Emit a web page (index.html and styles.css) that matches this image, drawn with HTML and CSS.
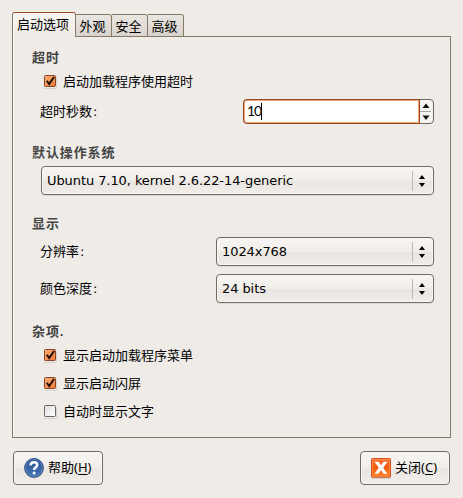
FILE: index.html
```html
<!DOCTYPE html>
<html lang="zh-CN">
<head>
<meta charset="utf-8">
<title>启动管理器</title>
<link rel="stylesheet" href="styles.css">
</head>
<body>
<svg class="defs" width="0" height="0">
  <defs>
    <linearGradient id="orange" x1="0" y1="0" x2="1" y2="1"><stop offset="0" stop-color="#fbb078"/><stop offset="1" stop-color="#f17a30"/></linearGradient>
    <linearGradient id="grey" x1="0" y1="0" x2="1" y2="1"><stop offset="0" stop-color="#dedede"/><stop offset="1" stop-color="#fff"/></linearGradient>
    <linearGradient id="blue" x1="0" y1="0" x2="0" y2="1"><stop offset="0" stop-color="#2d5491"/><stop offset="1" stop-color="#4475bb"/></linearGradient>
    <linearGradient id="red" x1="0" y1="0" x2="0" y2="1"><stop offset="0" stop-color="#f5743c"/><stop offset=".5" stop-color="#f55a10"/><stop offset="1" stop-color="#ff8420"/></linearGradient>
    <symbol id="checked" viewBox="0 0 15 15">
      <rect x="1.5" y="2.5" width="12" height="12" rx="1" fill="none" stroke="#d6d1ca"/>
      <rect x="1.5" y="1.5" width="11" height="11" rx="1" fill="url(#orange)" stroke="#85452a"/>
      <path d="M3.8 6.8L6.2 10L11 3" fill="none" stroke="#170d08" stroke-width="1.9"/>
    </symbol>
    <symbol id="unchecked" viewBox="0 0 15 15">
      <rect x="1.5" y="2.5" width="12" height="12" rx="1" fill="none" stroke="#d6d1ca"/>
      <rect x="1.5" y="1.5" width="11" height="11" rx="1" fill="url(#grey)" stroke="#6e675f"/>
    </symbol>
    <symbol id="updown" viewBox="0 0 6 12">
      <path d="M3 0L6 4H0zM3 12L6 8H0z" fill="#000"/>
    </symbol>
  </defs>
</svg>
<nav class="tabs">
  <div class="tab active">启动选项</div>
  <div class="tab">外观</div>
  <div class="tab">安全</div>
  <div class="tab">高级</div>
</nav>
<main class="panel">
  <h2 class="title">超时</h2>
  <label class="check"><svg class="box"><use href="#checked"/></svg><span>启动加载程序使用超时</span></label>
  <div class="row timeout">
    <span>超时秒数<span class="colon">:</span></span>
    <div class="spin">
      <div class="entry"><span class="value">10</span><i class="caret"></i></div>
      <svg class="steps" width="14" height="23" viewBox="0 0 14 23">
        <path d="M7 3.5L10.5 8H3.5zM7 20L10.5 15.5H3.5z" fill="#111"/>
        <path d="M1 11.5H12" stroke="#aaa59d"/>
      </svg>
    </div>
  </div>
  <h2 class="title system">默认操作系统</h2>
  <div class="select wide"><span>Ubuntu 7.10, kernel 2.6.22-14-generic</span><svg class="arrows"><use href="#updown"/></svg></div>
  <h2 class="title display">显示</h2>
  <div class="row"><span>分辨率<span class="colon">:</span></span><div class="select"><span>1024x768</span><svg class="arrows"><use href="#updown"/></svg></div></div>
  <div class="row depth"><span>颜色深度<span class="colon">:</span></span><div class="select"><span>24 bits</span><svg class="arrows"><use href="#updown"/></svg></div></div>
  <h2 class="title misc">杂项.</h2>
  <label class="check"><svg class="box"><use href="#checked"/></svg><span>显示启动加载程序菜单</span></label>
  <label class="check"><svg class="box"><use href="#checked"/></svg><span>显示启动闪屏</span></label>
  <label class="check"><svg class="box"><use href="#unchecked"/></svg><span>自动时显示文字</span></label>
</main>
<footer class="actions">
  <button class="button">
    <svg width="22" height="22" viewBox="0 0 22 22">
      <circle cx="11" cy="11.5" r="10" fill="#b9b7b3"/>
      <circle cx="11" cy="10.8" r="9.3" fill="url(#blue)" stroke="#254a82"/>
      <circle cx="11" cy="10.8" r="8.4" fill="none" stroke="#7396c8" stroke-width=".7"/>
      <path d="M7.6 8.3Q7.8 5.3 11 5.3Q14.2 5.3 14.2 8Q14.2 9.5 12.4 10.6Q11.1 11.4 11.1 13" fill="none" stroke="#fff" stroke-width="2.5"/>
      <circle cx="11.1" cy="15.9" r="1.5" fill="#fff"/>
    </svg>
    <span>帮助(<u>H</u>)</span>
  </button>
  <button class="button">
    <svg width="22" height="22" viewBox="0 0 22 22">
      <rect x="1" y="1.5" width="20" height="20" rx="1.5" fill="#bbb2aa"/>
      <rect x="1.5" y="1.5" width="19" height="18.5" rx="1" fill="url(#red)" stroke="#d84b12"/>
      <rect x="2.5" y="2.5" width="17" height="16.5" fill="none" stroke="#ff9860" stroke-width=".7"/>
      <path d="M4.5 4.8H8.5L11 8.3L13.5 4.8H17.5L13.2 10.7L17.5 16.7H13.5L11 13.2L8.5 16.7H4.5L8.8 10.7z" fill="#fff"/>
    </svg>
    <span>关闭(<u>C</u>)</span>
  </button>
</footer>
</body>
</html>
```
FILE: styles.css
```css
* { box-sizing: border-box; }
body {
  margin: 0;
  padding: 12px 12px 0;
  width: 463px;
  height: 498px;
  overflow: hidden;
  background: #efebe7;
  color: #000;
  font: 13px/18px "DejaVu Sans", "Noto Sans CJK SC", sans-serif;
}
svg { flex: none; display: block; }
.defs { position: absolute; }
.tabs { display: flex; align-items: flex-end; height: 25px; }
.tab {
  width: 36px;
  height: 23px;
  padding: 3px 2px 0 0;
  border: 1px solid #857867;
  border-left: 0;
  border-radius: 0 3px 0 0;
  background: linear-gradient(#e9e5e1, #d9d3cd);
  text-align: center;
  white-space: nowrap;
}
.tab.active {
  width: 64px;
  height: 25px;
  border: 1px solid #857867;
  border-top-color: #9a4c26;
  border-bottom: 0;
  border-radius: 3px 3px 0 0;
  background: linear-gradient(#f8f5f2, #efebe7);
  box-shadow: inset 1px 0 #faf8f5;
}
.panel {
  width: 439px;
  height: 402px;
  margin-top: -1px;
  padding: 11px 16px 0 18px;
  border: 1px solid #857867;
  border-top: 0;
  box-shadow: inset 1px 0 #f8f5f2;
  background: linear-gradient(#857867, #857867) 63px 0 / 375px 1px no-repeat;
}
.title { margin: 0; padding-left: 1px; height: 20px; font: bold 13px/21px "Noto Sans", "Noto Sans CJK SC", sans-serif; letter-spacing: .9px; color: #444; }
.check { display: flex; align-items: center; gap: 5px; height: 28px; padding-left: 12px; }
.check span { padding-top: 1px; }
.box { width: 15px; height: 15px; }
.row { display: flex; align-items: center; justify-content: space-between; padding-left: 9px; }
.colon { margin-left: 1px; }
.timeout { margin-top: 4px; }
.spin { display: flex; width: 191px; height: 25px; border: 1px solid #6e665c; border-radius: 4px; background: #f6f4f1; }
.entry {
  display: flex;
  align-items: center;
  width: 178px;
  margin: -1px 0 -1px -1px;
  padding-left: 4px;
  border: 1px solid #8c4a27;
  border-radius: 4px 0 0 4px;
  box-shadow: inset 0 0 0 1px #f8a36b;
  background: #fff;
}
.value { font: 14px/18px Lato, sans-serif; letter-spacing: -1px; padding-bottom: 2px; margin-left: -1px; }
.caret { width: 1px; height: 17px; background: #000; }
.steps { margin-left: -1px; }
.system { margin-top: 18px; }
.select {
  display: flex;
  align-items: center;
  justify-content: space-between;
  width: 218px;
  height: 29px;
  padding: 0 8px 0 5px;
  border: 1px solid #736b61;
  border-radius: 4px;
  box-shadow: inset 0 0 0 1px #f9f7f5, 0 1px #ded9d3;
  background: linear-gradient(#f7f5f3, #f1eeea 50%, #e9e5e0 52%, #f0ece8);
  letter-spacing: -.08px;
  white-space: nowrap;
}
.select::after { content: ""; order: 1; width: 1px; height: 20px; margin: 0 6px 0 auto; background: #bdb7af; }
.wide { width: 393px; margin: 4px 0 0 10px; }
.arrows { order: 2; width: 6px; height: 12px; }
.display { margin-top: 18px; }
.display + .row { margin-top: 4px; }
.depth { margin-top: 8px; }
.misc { margin-top: 18px; }
.actions { display: flex; justify-content: space-between; margin: 13px 1px 0; }
.button {
  display: flex;
  align-items: center;
  gap: 3px;
  width: 90px;
  height: 34px;
  padding: 0 0 1px 9px;
  border: 1px solid #736b61;
  border-radius: 4px;
  box-shadow: inset 0 0 0 1px #f9f7f5;
  background: linear-gradient(#f7f5f3, #f1eeea 50%, #e9e5e0 52%, #f2efec);
  color: #000;
  font: 13px/18px "Noto Sans", "Noto Sans CJK SC", sans-serif;
  white-space: nowrap;
}
.button span { padding-bottom: 1px; }
.button u { text-underline-offset: 2px; }
```
